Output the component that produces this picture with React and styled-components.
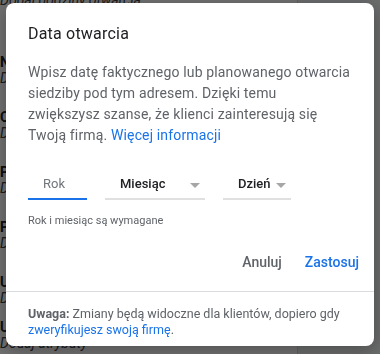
import React from "react";
import styled, { createGlobalStyle } from "styled-components";

const GlobalStyle = createGlobalStyle`
  html, body {
    margin: 0;
    padding: 0;
  }
  body {
    font-family: Roboto, "Liberation Sans", Arial, sans-serif;
    background: #fff;
    overflow: hidden;
  }
`

// page behind the dialog
const Page = styled.div`
  display: flex;
  width: 380px;
  height: 354px;
  overflow: hidden;
`
const MainColumn = styled.div`
  width: 297px;
  border-right: 1px solid #dadce0;
  display: flex;
  flex-direction: column;
`
const SideColumn = styled.div`
  flex: 1;
  background: #f1f3f4;
`
const InfoRow = styled.div`
  padding-top: ${p => p.$top}px;
  display: flex;
  flex-direction: column;
`
const InfoLabel = styled.div`
  font-size: 14px;
  line-height: 16px;
  font-weight: 700;
  color: #202124;
  white-space: nowrap;
`
const InfoHint = styled.div`
  font-size: 14px;
  line-height: 16px;
  font-style: italic;
  color: #3c4043;
  white-space: nowrap;
  margin-top: ${p => p.$shift || 0}px;
`

const Scrim = styled.div`
  position: fixed;
  inset: 0;
  background: rgba(0, 0, 0, 0.56);
`

const Dialog = styled.div`
  position: fixed;
  left: 6px;
  top: 3px;
  width: 368px;
  background: #fff;
  border-radius: 8px;
  box-shadow: 0 4px 18px rgba(0, 0, 0, 0.3);
  display: flex;
  flex-direction: column;
  overflow: hidden;
`
const Content = styled.div`
  padding: 19px 22px 0;
`
const Title = styled.h2`
  margin: 0;
  font-size: 16px;
  line-height: 24px;
  font-weight: 400;
  letter-spacing: 0.2px;
  color: #202124;
`
const Text = styled.p`
  margin: 16px 0 0;
  font-size: 14px;
  line-height: 21px;
  letter-spacing: 0.15px;
  color: #5f6368;
  white-space: nowrap;
`
const Link = styled.a`
  color: #1a73e8;
  text-decoration: none;
`
const Fields = styled.div`
  display: flex;
  gap: 18px;
  margin-top: 28px;
`
const Field = styled.div`
  width: ${p => p.$w}px;
  box-sizing: border-box;
  display: flex;
  align-items: center;
  justify-content: space-between;
  padding: 0 5px 4px 15px;
  font-size: 13px;
  line-height: 20px;
  font-weight: ${p => (p.$placeholder ? 400 : 500)};
  color: ${p => (p.$placeholder ? "#70757a" : "#202124")};
  border-bottom: 2px solid ${p => (p.$active ? "#1a73e8" : "#e0e0e0")};
`
const Arrow = styled.span`
  width: 0;
  height: 0;
  margin-top: 3px;
  border-left: 5px solid transparent;
  border-right: 5px solid transparent;
  border-top: 5px solid #a6a6a6;
`
const Helper = styled.div`
  margin-top: 13px;
  font-size: 11px;
  line-height: 16px;
  color: #5f6368;
`
const Actions = styled.div`
  display: flex;
  justify-content: flex-end;
  gap: 7px;
  padding: 15px 7px 0;
`
const Button = styled.button`
  height: 36px;
  padding: 0 8px;
  border: none;
  background: none;
  font-family: inherit;
  font-size: 14px;
  font-weight: 500;
  color: ${p => (p.$primary ? "#1a73e8" : "#5f6368")};
`
const Divider = styled.div`
  margin-top: 11px;
  height: 1px;
  background: #dadce0;
`
const Footer = styled.div`
  padding: 14px 22px 8px;
  font-size: 12.5px;
  line-height: 16px;
  color: #5f6368;
  white-space: nowrap;
  b {
    font-weight: 700;
  }
`

const rows = [
  { label: "Numer telefonu", hint: "Dodaj numer telefonu", top: 46 },
  { label: "Opis", hint: "Dodaj opis", top: 23 },
  { label: "Produkty", hint: "Dodaj produkty", top: 23 },
  { label: "Profile w mediach", hint: "Dodaj profile", top: 23 },
  { label: "Usługi", hint: "Dodaj usługi", top: 23 },
  { label: "Udogodnienia", hint: "Dodaj atrybuty", top: 13 },
];

export default function App() {
  return (
    <>
      <GlobalStyle />
      <Page>
        <MainColumn>
          <InfoHint $shift={-8}>Dodaj godziny otwarcia</InfoHint>
          {rows.map((r, i) => (
            <InfoRow key={i} $top={r.top}>
              <InfoLabel>{r.label}</InfoLabel>
              <InfoHint>{r.hint}</InfoHint>
            </InfoRow>
          ))}
        </MainColumn>
        <SideColumn />
      </Page>
      <Scrim />
      <Dialog>
        <Content>
          <Title>Data otwarcia</Title>
          <Text>
            Wpisz datę faktycznego lub planowanego otwarcia<br />
            siedziby pod tym adresem. Dzięki temu<br />
            zwiększysz szanse, że klienci zainteresują się<br />
            Twoją firmą. <Link>Więcej informacji</Link>
          </Text>
          <Fields>
            <Field $w={59} $active $placeholder>
              <span>Rok</span>
            </Field>
            <Field $w={100}>
              <span>Miesiąc</span>
              <Arrow />
            </Field>
            <Field $w={68}>
              <span>Dzień</span>
              <Arrow />
            </Field>
          </Fields>
          <Helper>Rok i miesiąc są wymagane</Helper>
        </Content>
        <Actions>
          <Button>Anuluj</Button>
          <Button $primary>Zastosuj</Button>
        </Actions>
        <Divider />
        <Footer>
          <b>Uwaga:</b> Zmiany będą widoczne dla klientów, dopiero gdy<br />
          <Link>zweryfikujesz swoją firmę</Link>.
        </Footer>
      </Dialog>
    </>
  );
}
